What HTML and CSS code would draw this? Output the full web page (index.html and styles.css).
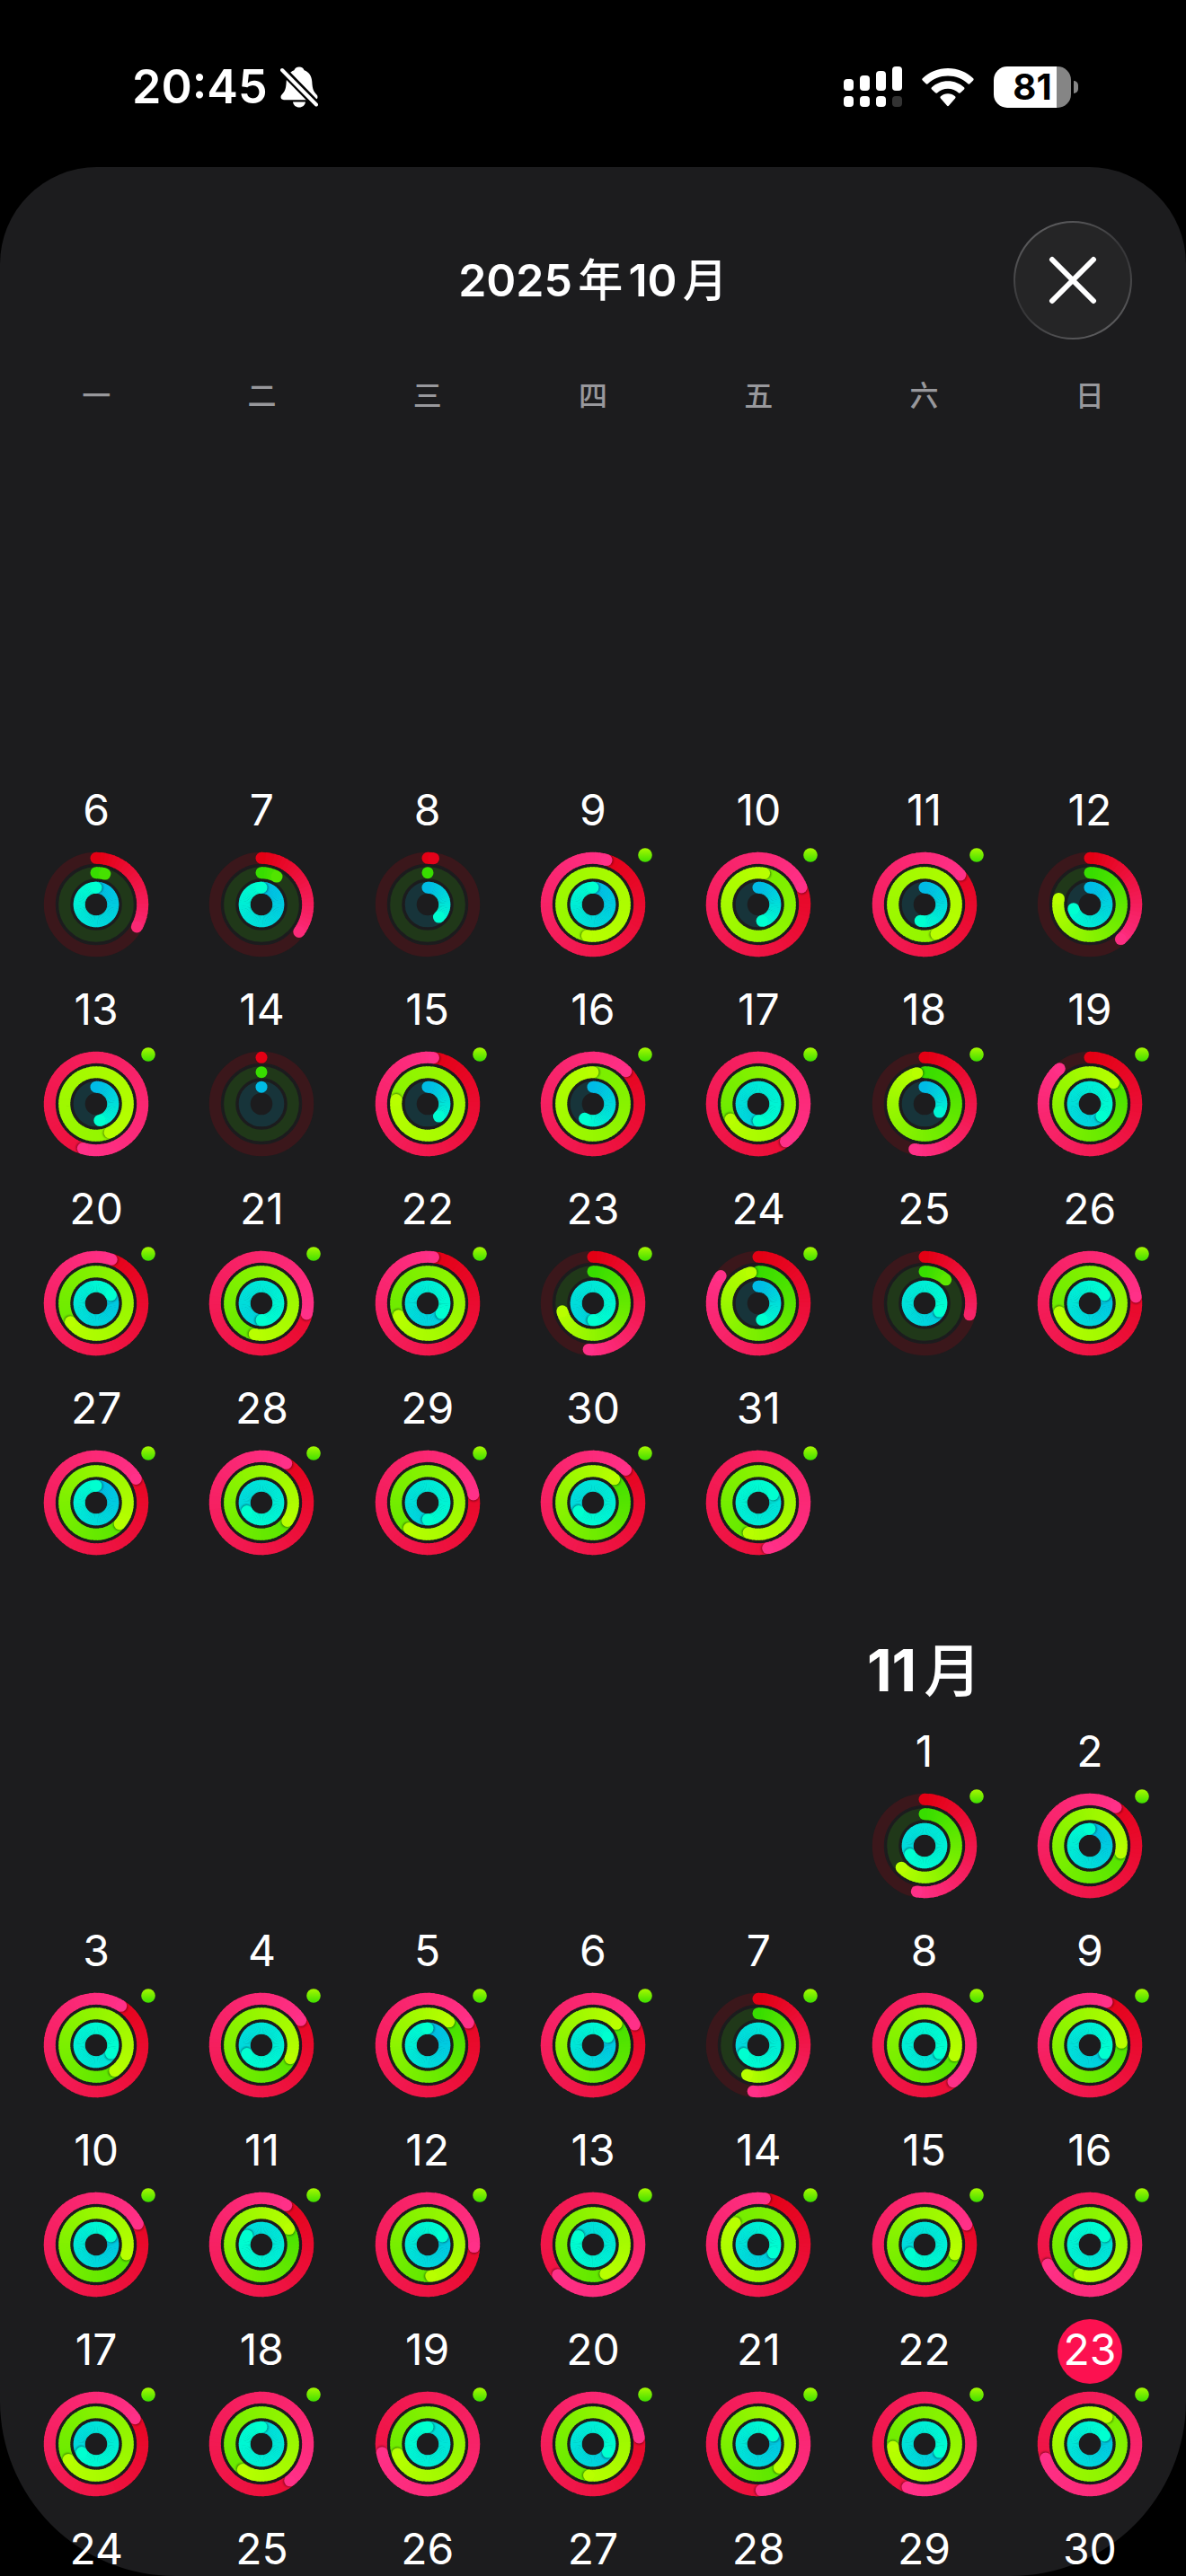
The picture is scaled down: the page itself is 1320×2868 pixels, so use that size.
FILE: index.html
```html
<!DOCTYPE html>
<html lang="zh-CN">
<head>
    <meta charset="UTF-8">
    <meta name="viewport" content="width=device-width, initial-scale=1.0">
    <title>2025年10月</title>
    <link rel="stylesheet" href="styles.css">
</head>
<body>
    <div class="status-bar">
        <div class="status-left">
            <span class="time">20:45</span>
            <svg class="bell" viewBox="0 0 42 46" width="42" height="46" aria-hidden="true">
                <path fill="#fff" d="M21 .500c2.800 0 5 1.500 5.600 3.800 5.400 2 8.400 6.700 8.700 12.700.400 8.200 1.800 11.100 5 14.300 2.300 2.400 1.200 5.900-2.200 5.900H3.900c-3.400 0-4.500-3.500-2.200-5.900 3.200-3.200 4.600-6.100 5-14.300.300-6 3.300-10.700 8.700-12.700C16 2 18.200.500 21 .500z"/>
                <path fill="#fff" d="M14 39.500h14c-.500 3.800-3.400 6-7 6s-6.500-2.200-7-6z"/>
                <path stroke="#000" stroke-width="9" stroke-linecap="round" d="M1 2.500l40 41"/>
                <path stroke="#fff" stroke-width="4" stroke-linecap="round" d="M2 4l38 38.500"/>
            </svg>
        </div>
        <div class="status-right">
            <svg viewBox="0 0 65 46" width="65" height="46" fill="#fff" aria-hidden="true">
                <rect x="0" y="14" width="11" height="13" rx="4"/>
                <rect x="18" y="10" width="11" height="17" rx="4"/>
                <rect x="36" y="5" width="11" height="22" rx="4"/>
                <rect x="54" y="0" width="11" height="27" rx="4"/>
                <rect x="0" y="33" width="11" height="12" rx="4"/>
                <rect x="18" y="33" width="11" height="12" rx="4"/>
                <rect x="36" y="33" width="11" height="12" rx="4"/>
                <rect x="54" y="33" width="11" height="12" rx="4" fill="#333"/>
            </svg>
            <svg viewBox="0 0 58 43" width="58" height="43" fill="#fff" aria-hidden="true">
                <path d="M29 0C18 0 8.200 4.200.800 11.200a1.500 1.500 0 0 0 0 2.200l3.800 3.800c.600.600 1.500.600 2.100 0C12.500 11.800 20.300 8.600 29 8.600s16.500 3.200 22.300 8.600c.600.600 1.500.600 2.100 0l3.800-3.800c.600-.600.600-1.600 0-2.200C49.800 4.200 40 0 29 0z"/>
                <path d="M29 14.200c-7 0-13.300 2.700-18 7a1.500 1.500 0 0 0 0 2.200l4 3.900c.600.600 1.400.600 2 .100 3.200-2.900 7.400-4.600 12-4.600s8.800 1.700 12 4.600c.600.500 1.400.500 2-.100l4-3.900c.600-.600.600-1.600 0-2.200-4.700-4.300-11-7-18-7z"/>
                <path d="M29 28.300c-3.100 0-5.900 1.100-8 3-.700.600-.700 1.500-.100 2.100l7 8.200c.600.700 1.600.700 2.200 0l7-8.200c.600-.600.600-1.500-.100-2.100-2.100-1.900-4.900-3-8-3z"/>
            </svg>
            <div class="battery">
                <div class="battery-body">81</div>
                <div class="battery-tip"></div>
            </div>
        </div>
    </div>

    <main class="sheet">
        <header class="sheet-header">
            <h1>2025<span class="cjk">年</span>10<span class="cjk">月</span></h1>
            <button class="close" aria-label="关闭">
                <svg viewBox="0 0 54 54" width="54" height="54" aria-hidden="true">
                    <path d="M4 4l46 46M50 4L4 50" stroke="#fff" stroke-width="6" stroke-linecap="round"/>
                </svg>
            </button>
        </header>
        <div class="weekdays">
            <span>一</span><span>二</span><span>三</span><span>四</span><span>五</span><span>六</span><span>日</span>
        </div>
        <section class="month october">
            <div class="days" id="october"></div>
        </section>
        <section class="month">
            <div class="month-label"><h2>11<span class="cjk">月</span></h2></div>
            <div class="days" id="november"></div>
        </section>
    </main>

    <script src="script.js"></script>
</body>
</html>
```
FILE: styles.css
```css
* {
    box-sizing: border-box;
}
body {
    margin: 0;
    height: 100vh;
    overflow: hidden;
    display: flex;
    flex-direction: column;
    background: #000;
    color: #fff;
    font-family: Inter, "Noto Sans CJK SC", sans-serif;
}
h1, h2 {
    margin: 0;
    text-autospace: normal;
    white-space: nowrap;
}
.cjk {
    font-weight: 500;
}
button {
    border: none;
    padding: 0;
    background: none;
    color: inherit;
    font: inherit;
    cursor: pointer;
}

/* status bar */
.status-bar {
    flex: none;
    height: 186px;
    padding: 8px 120px 0 147px;
    display: flex;
    align-items: center;
    justify-content: space-between;
}
.status-left {
    display: flex;
    align-items: center;
    gap: 14px;
}
.time {
    font-size: 52px;
    font-weight: 600;
    line-height: 60px;
}
.status-right {
    display: flex;
    align-items: center;
    gap: 22px;
}
.battery {
    display: flex;
    align-items: center;
    gap: 3px;
}
.battery-body {
    width: 86px;
    height: 46px;
    border-radius: 15px;
    background: linear-gradient(90deg, #fff 81%, #858585 81%);
    color: #000;
    font-size: 40px;
    font-weight: 700;
    line-height: 46px;
    text-align: center;
}
.battery-tip {
    width: 5px;
    height: 14px;
    border-radius: 0 5px 5px 0;
    background: #858585;
}

/* sheet */
.sheet {
    flex: 1;
    min-height: 0;
    padding-top: 60px;
    background: #1c1c1e;
    border-radius: 108px 108px 195px 195px;
}
.sheet-header {
    display: grid;
    grid-template-columns: 132px 1fr 132px;
    align-items: center;
    padding: 0 60px;
}
.sheet-header h1 {
    grid-column: 2;
    font-size: 50px;
    font-weight: 600;
    line-height: 60px;
    text-align: center;
}
.close {
    width: 132px;
    height: 132px;
    border-radius: 50%;
    border: 2px solid transparent;
    background:
        linear-gradient(#252526, #252526) padding-box,
        linear-gradient(150deg, #6a6a6c, #38383a 45%, #38383a 55%, #6a6a6c) border-box;
    display: flex;
    align-items: center;
    justify-content: center;
}
.weekdays, .month-label, .days {
    display: grid;
    grid-template-columns: repeat(7, 1fr);
    padding: 0 15px;
}
.weekdays {
    margin-top: 42px;
    color: #98989c;
    font-size: 32px;
    font-weight: 500;
    line-height: 42px;
    text-align: center;
}

/* months */
.october {
    padding-top: 406px;
}
.month-label {
    padding-top: 80px;
    margin-bottom: 8px;
}
.month-label h2 {
    grid-column: 6;
    justify-self: center;
    font-size: 64px;
    font-weight: 700;
    line-height: 96px;
}
.days {
    row-gap: 24px;
}
.day {
    display: flex;
    flex-direction: column;
    align-items: center;
    gap: 8px;
}
.number {
    width: 72px;
    height: 72px;
    border-radius: 50%;
    font-size: 48px;
    line-height: 68px;
    text-align: center;
}
.today .number {
    background: #fc1150;
}
.rings {
    display: block;
    width: 118px;
    height: 118px;
    overflow: visible;
}
```
FILE: script.js
```js
// move, exercise, stand as a share of the goal, then 1 if there was a workout
const october = {
    6: [0.33, 0.045, 1, 0], 7: [0.35, 0.08, 1, 0], 8: [0.02, 0, 0.385, 0],
    9: [1.047, 3.53, 1, 1], 10: [1.19, 2.03, 0.465, 1], 11: [1.14, 3.44, 0.54, 1],
    12: [0.384, 0.78, 0.71, 0], 13: [1.546, 3.43, 0.467, 1], 14: [0, 0, 0, 0],
    15: [1.02, 2.77, 0.385, 1], 16: [1.126, 2, 0.583, 1], 17: [1.4, 1.67, 1.5, 1],
    18: [0.535, 0.963, 0.33, 1], 19: [0.887, 1.135, 1.38, 1], 20: [1.054, 1.65, 1.17, 1],
    21: [1.287, 1.535, 1.5, 1], 22: [1.02, 1.686, 1.35, 1], 23: [0.515, 0.71, 1.5, 1],
    24: [0.85, 0.963, 0.467, 1], 25: [0.29, 0.117, 1.33, 0], 26: [1.228, 1.705, 1.17, 1],
    27: [1.164, 1.367, 1, 1], 28: [1.09, 1.348, 1.665, 1], 29: [1.222, 1.6, 1.5, 1],
    30: [1.125, 1.117, 1.665, 1], 31: [1.467, 1.55, 2.17, 1]
};
const november = {
    1: [0.527, 0.63, 1.665, 1], 2: [1.095, 1.286, 1, 1], 3: [1.09, 1.4, 2.33, 1],
    4: [1.16, 1.318, 1.665, 1], 5: [1.17, 1.117, 1, 1], 6: [1.177, 1.133, 1.17, 1],
    7: [0.518, 0.558, 1.665, 1], 8: [1.394, 1.303, 2.33, 1], 9: [1.06, 1.238, 1.33, 1],
    10: [1.177, 1.3, 1.17, 1], 11: [1.09, 1.168, 1.84, 1], 12: [1.258, 1.483, 1.17, 1],
    13: [1.637, 1.436, 1.835, 1], 14: [1.023, 1.87, 1.33, 1], 15: [1.18, 1.3, 1.665, 1],
    16: [1.68, 1.553, 2.17, 1], 17: [1.158, 1.668, 1.665, 1], 18: [1.395, 1.6, 2, 1],
    19: [1.72, 1.7, 2, 1], 20: [1.228, 1.52, 1.33, 1], 21: [1.49, 1.385, 1.17, 1],
    22: [1.56, 1.736, 1.33, 1], 23: [1.7, 2.09, 1.17, 1]
};

const RINGS = [
    { r: 51.7, from: [227, 0, 20], to: [255, 48, 136], track: '#3b171b' },
    { r: 35.3, from: [56, 221, 0], to: [184, 255, 0], track: '#203819' },
    { r: 18.8, from: [0, 187, 230], to: [0, 255, 208], track: '#17343a' }
];
const WIDTH = 13;
const C = 59;

function mix(a, b, t) {
    return `rgb(${a.map((v, i) => Math.round(v + (b[i] - v) * t)).join(',')})`;
}

function point(r, turn) {
    const a = turn * 2 * Math.PI;
    return [(C + r * Math.sin(a)).toFixed(2), (C - r * Math.cos(a)).toFixed(2)];
}

function drawRing(ring, value) {
    let svg = `<circle cx="${C}" cy="${C}" r="${ring.r}" fill="none" stroke="${ring.track}" stroke-width="${WIDTH}"/>`;
    // short arcs never reach the full end colour
    const span = Math.max(value, 0.4);
    // only the last lap is visible
    const start = Math.max(0, value - 1);
    if (start === 0) {
        const [x, y] = point(ring.r, 0);
        svg += `<circle cx="${x}" cy="${y}" r="${WIDTH / 2}" fill="${mix(ring.from, ring.to, 0)}"/>`;
    }
    const steps = Math.ceil((value - start) * 72);
    for (let i = 0; i < steps; i++) {
        const a = start + (value - start) * i / steps;
        const b = Math.min(value, start + (value - start) * (i + 1) / steps + 0.004);
        const [x1, y1] = point(ring.r, a);
        const [x2, y2] = point(ring.r, b);
        svg += `<path d="M${x1} ${y1}A${ring.r} ${ring.r} 0 0 1 ${x2} ${y2}" fill="none" stroke="${mix(ring.from, ring.to, a / span)}" stroke-width="${WIDTH}"/>`;
    }
    if (value > 0) {
        if (value > 0.93) {
            const [sx, sy] = point(ring.r, value + 0.25 / ring.r);
            svg += `<circle cx="${sx}" cy="${sy}" r="6" fill="#000" opacity="0.45" filter="url(#soft)"/>`;
        }
        const [x, y] = point(ring.r, value);
        svg += `<circle cx="${x}" cy="${y}" r="${WIDTH / 2}" fill="${mix(ring.from, ring.to, value / span)}"/>`;
    }
    return svg;
}

function drawRings(data) {
    let svg = '<svg class="rings" viewBox="0 0 118 118" aria-hidden="true"><defs>' +
        '<filter id="soft" x="-50%" y="-50%" width="200%" height="200%"><feGaussianBlur stdDeviation="1"/></filter>' +
        '<linearGradient id="dot" x1="0" y1="0" x2="0" y2="1"><stop offset="0" stop-color="#a8f800"/><stop offset="1" stop-color="#3fdf00"/></linearGradient></defs>';
    RINGS.forEach((ring, i) => {
        // dark rim between neighbouring rings
        if (i > 0) svg += `<circle cx="${C}" cy="${C}" r="${ring.r + 8}" fill="#1c1c1e"/>`;
        svg += drawRing(ring, data[i]);
    });
    if (data[3]) svg += `<circle cx="${C + 58}" cy="${C - 55}" r="7.8" fill="url(#dot)"/>`;
    return svg + '</svg>';
}

function fillMonth(id, first, last, column, data) {
    const box = document.getElementById(id);
    for (let d = first; d <= last; d++) {
        const day = document.createElement('button');
        day.className = 'day';
        if (id === 'november' && d === 23) day.classList.add('today');
        if (d === first) day.style.gridColumnStart = column;
        day.innerHTML = `<span class="number">${d}</span>` + (data[d] ? drawRings(data[d]) : '');
        box.appendChild(day);
    }
}

fillMonth('october', 6, 31, 1, october);
fillMonth('november', 1, 30, 6, november);
```
